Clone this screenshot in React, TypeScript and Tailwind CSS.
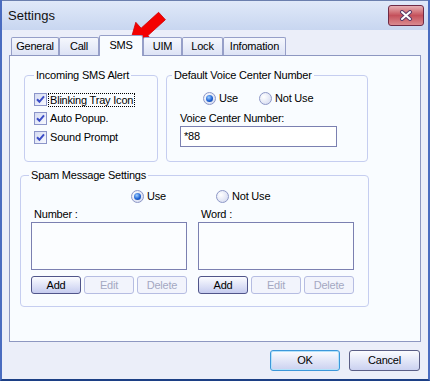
import type { ReactNode } from 'react';

const tabs = [
  { label: 'General', w: 'w-[48px]' },
  { label: 'Call', w: 'w-[40px]' },
  { label: 'SMS', w: 'w-[44px]', active: true },
  { label: 'UIM', w: 'w-[39px]' },
  { label: 'Lock', w: 'w-[41px]' },
  { label: 'Infomation', w: 'w-[63px]' },
];

const CheckBox = () => (
  <span className="w-[13px] h-[13px] shrink-0 border border-[#8c95c9] bg-linear-to-br from-[#d5dbf2] to-[#f8f9fe] flex items-center justify-center">
    <svg width="9" height="9" viewBox="0 0 9 9">
      <path d="M1 4.3 L3.4 6.8 L8 1.4" stroke="#3b4dc7" strokeWidth="2" fill="none" />
    </svg>
  </span>
);

const Radio = ({ on }: { on?: boolean }) => (
  <span className="w-[13px] h-[13px] shrink-0 rounded-full border border-[#8e98c7] bg-[radial-gradient(circle_at_35%_35%,#ffffff,#cfd5ee)] flex items-center justify-center">
    {on && (
      <span className="w-[7px] h-[7px] rounded-full bg-[radial-gradient(circle_at_40%_35%,#9fd0ff,#1f62d4_55%,#0b3a94)]" />
    )}
  </span>
);

const Btn = ({ children, disabled }: { children: ReactNode; disabled?: boolean }) => (
  <div
    className={
      disabled
        ? 'w-[50px] h-[18px] rounded-[3px] border border-[#b6bde2] bg-[#f2f4fc] text-[#a4a8c2] flex items-center justify-center'
        : 'w-[50px] h-[18px] rounded-[3px] border border-[#50558a] bg-linear-to-b from-[#fbfcff] to-[#c6ccef] flex items-center justify-center'
    }
  >
    {children}
  </div>
);

const SpamColumn = ({ label }: { label: string }) => (
  <div className="flex flex-col w-[157px]">
    <div className="pl-[3px] leading-[12px]">{label}</div>
    <div className="mt-[2px] w-[156px] h-[48px] border border-[#7b80b1] bg-[#fbfdff]" />
    <div className="mt-[6px] flex gap-[3px]">
      <Btn>Add</Btn>
      <Btn disabled>Edit</Btn>
      <Btn disabled>Delete</Btn>
    </div>
  </div>
);

export default function App() {
  return (
    <div className="relative w-[430px] h-[381px] flex flex-col overflow-hidden bg-[#ebeef9] border-x-2 border-b-2 border-x-[#4a6cc0] border-b-[#1c3f85] font-['Liberation_Sans',Arial,sans-serif] text-[11px] tracking-[-0.2px] text-black">
      {/* Title bar */}
      <div className="h-[30px] shrink-0 border-t border-[#6b7fae] bg-linear-to-b from-[#e0e9f9] to-[#c8d6f0] flex items-center justify-between pl-[6px] pr-[4px]">
        <span className="text-[13px] tracking-normal text-[#111]">Settings</span>
        <div className="w-[36px] h-[21px] rounded-[3px] border border-[#6f2a45] bg-linear-to-b from-[#e6b0b5] via-[#c4505b] to-[#da8a90] flex items-center justify-center">
          <svg width="14" height="11" viewBox="0 0 14 11">
            <path d="M3 2 L11 9 M11 2 L3 9" stroke="#5a3a6a" strokeWidth="4" strokeLinecap="round" />
            <path d="M3 2 L11 9 M11 2 L3 9" stroke="#ffffff" strokeWidth="2" strokeLinecap="round" />
          </svg>
        </div>
      </div>

      {/* Body */}
      <div className="flex flex-col pl-[7px] pt-[5px]">
        <div className="relative z-10 -mb-px ml-[2px] h-[21px] flex items-end">
          {tabs.map((t) =>
            t.active ? (
              <div
                key={t.label}
                className={`${t.w} h-[21px] border border-b-0 border-[#969fc8] rounded-t-[2px] bg-[#f9fcff] flex items-center justify-center pb-[1px]`}
              >
                {t.label}
              </div>
            ) : (
              <div
                key={t.label}
                className={`${t.w} h-[18px] mb-px border border-b-0 border-[#969fc8] rounded-t-[2px] bg-linear-to-b from-[#f5f7fd] to-[#dde3f5] flex items-center justify-center`}
              >
                {t.label}
              </div>
            )
          )}
        </div>

        {/* Tab panel */}
        <div className="w-[412px] h-[287px] border border-[#8d97c1] bg-[#f9fcff] pt-[13px] flex flex-col">
          <div className="flex ml-[14px] gap-[8px]">
            <fieldset className="w-[134px] h-[93px] border border-[#c6cef0] rounded-[4px] pl-[9px]">
              <legend className="px-[2px] leading-[12px]">Incoming SMS Alert</legend>
              <div className="mt-[9px] flex flex-col">
                <label className="h-[19px] flex items-center gap-[1px]">
                  <CheckBox />
                  <span className="px-[1px] leading-[12px] border border-dotted border-black">Blinking Tray Icon</span>
                </label>
                <label className="h-[19px] flex items-center gap-[3px]">
                  <CheckBox />
                  <span>Auto Popup.</span>
                </label>
                <label className="h-[19px] flex items-center gap-[3px]">
                  <CheckBox />
                  <span>Sound Prompt</span>
                </label>
              </div>
            </fieldset>

            <fieldset className="w-[202px] h-[93px] border border-[#c6cef0] rounded-[4px] pl-[5px]">
              <legend className="px-[2px] leading-[12px]">Default Voice Center Number</legend>
              <div className="mt-[10px] h-[14px] ml-[31px] flex items-center">
                <div className="w-[56px] flex items-center gap-[3px]">
                  <Radio on />
                  <span>Use</span>
                </div>
                <div className="flex items-center gap-[3px]">
                  <Radio />
                  <span>Not Use</span>
                </div>
              </div>
              <div className="mt-[7px] ml-[8px] leading-[12px]">Voice Center Number:</div>
              <div className="mt-[2px] ml-[8px] w-[157px] h-[21px] border border-[#7b80b1] bg-white flex items-center pl-[3px]">
                *88
              </div>
            </fieldset>
          </div>

          <fieldset className="mt-[7px] ml-[10px] w-[349px] h-[138px] border border-[#c6cef0] rounded-[4px] pl-[8px]">
            <legend className="px-[2px] leading-[12px]">Spam Message Settings</legend>
            <div className="mt-[8px] h-[14px] ml-[102px] flex items-center">
              <div className="w-[85px] flex items-center gap-[3px]">
                <Radio on />
                <span>Use</span>
              </div>
              <div className="flex items-center gap-[3px]">
                <Radio />
                <span>Not Use</span>
              </div>
            </div>
            <div className="mt-[5px] ml-[2px] flex gap-[10px]">
              <SpamColumn label="Number :" />
              <SpamColumn label="Word :" />
            </div>
          </fieldset>
        </div>

        {/* Footer buttons */}
        <div className="mt-[8px] pr-[8px] flex justify-end gap-[9px]">
          <div className="w-[70px] h-[21px] rounded-[3px] border border-[#3c97da] shadow-[inset_0_0_0_1px_#b4e2fb] bg-linear-to-b from-[#fbfcff] to-[#cbd1f0] flex items-center justify-center">
            OK
          </div>
          <div className="w-[71px] h-[21px] rounded-[3px] border border-[#5a5e86] bg-linear-to-b from-[#fbfcff] to-[#cbd1f0] flex items-center justify-center">
            Cancel
          </div>
        </div>
      </div>

      {/* Red annotation arrow */}
      <svg className="absolute left-0 top-0 pointer-events-none" width="200" height="60" viewBox="0 0 200 60">
        <polygon
          points="163.4,19.7 156.6,12.3 139.1,28.2 133.8,22.3 127,46 151.2,41.5 145.9,35.6"
          fill="#f40000"
          stroke="#d00000"
          strokeWidth="0.8"
          strokeLinejoin="round"
        />
      </svg>
    </div>
  );
}
